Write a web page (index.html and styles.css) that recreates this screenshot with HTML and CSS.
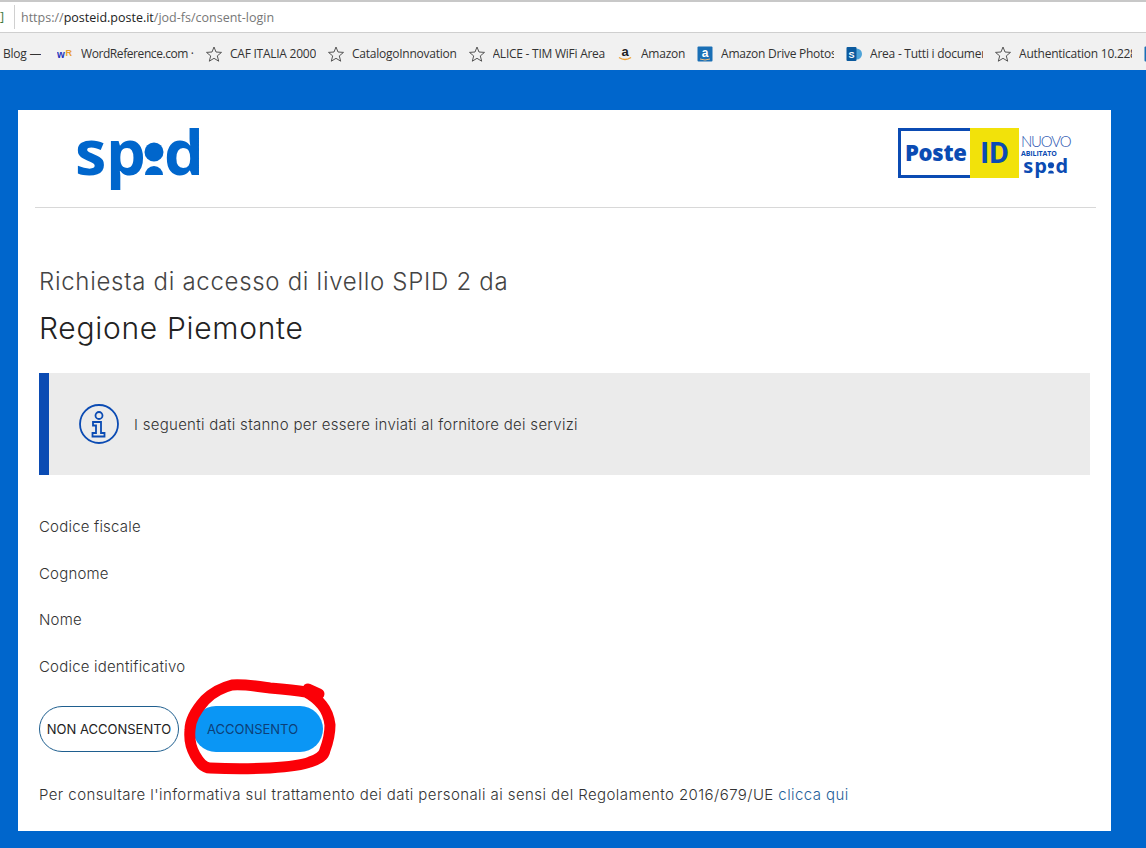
FILE: index.html
```html
<!DOCTYPE html>
<html lang="it">
<head>
<meta charset="utf-8">
<title>SPID consent</title>
<link rel="stylesheet" href="styles.css">
</head>
<body>
<header class="chrome">
  <div class="addressbar">
    <span class="secure">]</span>
    <span class="url"><span class="dim">https://</span>posteid.poste.it<span class="dim">/jod-fs/consent-login</span></span>
  </div>
  <nav class="bookmarks">
    <span class="bm bm-blog"><span class="bm-label">Blog —</span></span>
    <span class="bm"><svg class="ic" viewBox="0 0 16 16"><text x="0" y="12" class="wr-w">w</text><text x="8.500" y="10" class="wr-r">R</text></svg><span class="bm-label bm-tight">WordReference.com ·</span></span>
    <span class="bm"><svg class="ic" viewBox="0 0 16 16"><path class="star" d="M8 1l2 5 5.500 .4-4.200 3.500 1.400 5.300L8 12.300 3.300 15.200l1.400-5.300L.5 6.400 6 6z"/></svg><span class="bm-label">CAF ITALIA 2000</span></span>
    <span class="bm"><svg class="ic" viewBox="0 0 16 16"><path class="star" d="M8 1l2 5 5.500 .4-4.200 3.500 1.400 5.300L8 12.300 3.300 15.200l1.400-5.300L.5 6.400 6 6z"/></svg><span class="bm-label">CatalogoInnovation</span></span>
    <span class="bm"><svg class="ic" viewBox="0 0 16 16"><path class="star" d="M8 1l2 5 5.500 .4-4.200 3.500 1.400 5.300L8 12.300 3.300 15.200l1.400-5.300L.5 6.400 6 6z"/></svg><span class="bm-label">ALICE - TIM WiFi Area</span></span>
    <span class="bm"><svg class="ic" viewBox="0 0 16 16"><text x="8" y="10" class="az-a">a</text><path class="az-smile" d="M2 11.500q6 4 12 0"/></svg><span class="bm-label">Amazon</span></span>
    <span class="bm"><svg class="ic" viewBox="0 0 16 16"><rect class="az-box" x="0.500" y="0.500" width="15" height="15" rx="1"/><text x="8" y="11" class="az-b">a</text><path class="az-line" d="M3 13q5 2 10 0"/></svg><span class="bm-label">Amazon Drive Photos</span></span>
    <span class="bm"><svg class="ic" viewBox="0 0 16 16"><circle class="sp-c" cx="10.500" cy="8" r="5.500"/><rect class="sp-box" x="0.500" y="1" width="10" height="14" rx="1"/><text x="5.500" y="11.500" class="sp-s">S</text></svg><span class="bm-label">Area - Tutti i documenti</span></span>
    <span class="bm"><svg class="ic" viewBox="0 0 16 16"><path class="star" d="M8 1l2 5 5.500 .4-4.200 3.500 1.400 5.300L8 12.300 3.300 15.200l1.400-5.300L.5 6.400 6 6z"/></svg><span class="bm-label">Authentication 10.228.1</span></span>
    <span class="bm"><svg class="ic" viewBox="0 0 16 16"><rect class="az-box" x="0.500" y="0.500" width="15" height="15" rx="1"/></svg></span>
  </nav>
</header>

<main class="page">
  <section class="card">
    <div class="logos">
      <svg class="spid" viewBox="0 0 126 62" role="img" aria-label="spid">
        <text y="47" class="spid-t"><tspan x="0">s</tspan><tspan x="31">p</tspan></text>
        <circle class="spid-f" cx="79" cy="24" r="9.500"/>
        <path class="spid-f" d="M70 47a9 9 0 0 1 18 0z"/>
        <text x="89" y="47" class="spid-t">d</text>
      </svg>
      <div class="posteid">
        <div class="poste-box">Poste</div>
        <div class="id-box">ID</div>
        <div class="poste-side">
          <span class="nuovo">NUOVO</span>
          <span class="abil">ABILITATO</span>
          <svg class="spid-mini" viewBox="0 0 50 22" role="img" aria-label="spid">
            <text y="17" class="mini-t"><tspan x="0">s</tspan><tspan x="12">p</tspan></text>
            <circle class="mini-f" cx="30.500" cy="8" r="3.400"/>
            <path class="mini-f" d="M27.300 17a3.200 3.200 0 0 1 6.400 0z"/>
            <text x="35.500" y="17" class="mini-t">d</text>
          </svg>
        </div>
      </div>
    </div>

    <div class="content">
      <p class="lead">Richiesta di accesso di livello SPID 2 da</p>
      <h1 class="title">Regione Piemonte</h1>

      <div class="notice">
        <svg class="info" viewBox="0 0 40 40">
          <circle cx="20" cy="20" r="19"/>
          <circle cx="20" cy="11.500" r="3.500"/>
          <path d="M14 18h8v11h3.500v3.500h-12V29H17v-7.500h-3z"/>
        </svg>
        <span>I seguenti dati stanno per essere inviati al fornitore dei servizi</span>
      </div>

      <ul class="fields">
        <li>Codice fiscale</li>
        <li>Cognome</li>
        <li>Nome</li>
        <li>Codice identificativo</li>
      </ul>

      <div class="actions">
        <button class="btn btn-no">NON ACCONSENTO</button>
        <button class="btn btn-yes">ACCONSENTO</button>
      </div>

      <p class="privacy">Per consultare l'informativa sul trattamento dei dati personali ai sensi del Regolamento 2016/679/UE <a href="#">clicca qui</a></p>
    </div>
  </section>
</main>

<svg class="scribble" viewBox="0 0 160 105">
  <path d="M48 10C36 13 28 18 21 25 12 35 6 45 6 55c-1 10 1 18 5 25 4 7 8 13 15 13 20 1 40 1 60 0 15-1 30-2 40-6 9-3 14-6 15-12 3-8 5-17 5-25-1-8-3-14-8-20-4-5-10-10-16-13-12-2-24-3-36-4C72 11 60 9 48 10z"/>
  <path d="M124 14l11 5"/>
</svg>
</body>
</html>
```
FILE: styles.css
```css
* { box-sizing: border-box; }
html, body { margin: 0; padding: 0; }
body {
  width: 1146px;
  height: 848px;
  overflow: hidden;
  background: #0066cc;
  font-family: "Inter", "Lato", sans-serif;
  color: #333;
  position: relative;
}

/* Browser chrome */
.chrome {
  height: 70px;
  background: #f1f1f1;
  border-top: 2px solid #c8c8c8;
  font-family: "Open Sans", sans-serif;
}
.addressbar {
  height: 31px;
  background: #fff;
  border-bottom: 1px solid #cfcfcf;
  display: flex;
  align-items: center;
  font-size: 12.500px;
}
.secure { width: 15px; color: #3c7a3c; border-right: 1px solid #d0d0d0; height: 24px; line-height: 24px; }
.url { margin-left: 6px; color: #222; }
.dim { color: #777; }
.bookmarks {
  display: flex;
  align-items: center;
  gap: 12px;
  height: 37px;
  padding: 4px 0 0 3px;
  font-size: 12px;
  color: #333;
  white-space: nowrap;
  overflow: hidden;
}
.bm { display: flex; align-items: center; gap: 8px; flex: none; }
.bm-blog { width: 42px; }
.bm-label { max-width: 113px; overflow: hidden; letter-spacing: -0.25px; }
.bm-tight { width: 113px; letter-spacing: -0.42px; }
.ic { width: 16px; height: 16px; flex: none; display: block; }
.star { fill: none; stroke: #555; stroke-width: 1; }
.wr-w { font: bold 10px "Liberation Sans", sans-serif; fill: #2233bb; }
.wr-r { font: bold 9px "Liberation Sans", sans-serif; fill: #e8a030; }
.az-a { font: bold 13px "Liberation Sans", sans-serif; fill: #222; text-anchor: middle; }
.az-smile { fill: none; stroke: #f0a030; stroke-width: 1.500; }
.az-box { fill: #1a6fb5; }
.az-b { font: bold 12px "Liberation Sans", sans-serif; fill: #fff; text-anchor: middle; }
.az-line { fill: none; stroke: #f0c080; stroke-width: 1; }
.sp-c { fill: #4ea3d8; }
.sp-box { fill: #0b5a9e; }
.sp-s { font: bold 9px "Liberation Sans", sans-serif; fill: #fff; text-anchor: middle; }

/* Page */
.page { padding: 40px 35px 0 18px; }
.card {
  height: 721px;
  background: #fff;
  padding: 0 15px 0 17px;
}
.logos {
  height: 98px;
  border-bottom: 1px solid #d8d8d8;
  display: flex;
  justify-content: space-between;
  padding: 18px 26px 0 40px;
}
.spid { width: 126px; height: 62px; display: block; }
.spid-t { font: bold 63px "Open Sans", sans-serif; fill: #0066cc; }
.spid-f { fill: #0066cc; }

.posteid { display: flex; height: 50px; }
.poste-box {
  width: 72px;
  border: 3px solid #0b4bb3;
  border-right: 0;
  font: 800 22px/43px "Open Sans", sans-serif;
  letter-spacing: -0.3px;
  color: #0b4bb3;
  padding-left: 4px;
}
.id-box {
  width: 49px;
  background: #f2e20a;
  color: #0b4bb3;
  text-align: center;
  font: bold 30px/49px "Roboto", sans-serif;
}
.poste-side { width: 51px; padding-left: 2px; display: flex; flex-direction: column; color: #0b4bb3; }
.nuovo { font: 300 15px/15px "Lato", sans-serif; margin-top: 6px; letter-spacing: -1.2px; color: #2b55b0; }
.abil { font: bold 7px/9px "Open Sans", sans-serif; letter-spacing: -0.1px; }
.spid-mini { width: 50px; height: 22px; display: block; }
.mini-t { font: bold 22px "Open Sans", sans-serif; fill: #0b4bb3; }
.mini-f { fill: #0b4bb3; }

.content { padding: 0 6px 0 4px; }
.lead {
  margin: 58px 0 0;
  font-size: 24px;
  line-height: 32px;
  font-weight: 300;
  color: #444;
  letter-spacing: 0.7px;
}
.title {
  margin: 11px 0 0;
  font-size: 30px;
  line-height: 38px;
  font-weight: 300;
  color: #222;
  letter-spacing: 0.7px;
}
.notice {
  margin-top: 26px;
  height: 102px;
  background: #ebebeb;
  border-left: 10px solid #0b4bb3;
  display: flex;
  align-items: center;
  gap: 15px;
  padding-left: 30px;
  font-size: 15px;
  font-weight: 300;
  color: #333;
  letter-spacing: 0.28px;
}
.info { width: 40px; height: 40px; flex: none; }
.info circle, .info path { fill: none; stroke: #0b4bb3; stroke-width: 1.800; }

.fields {
  list-style: none;
  margin: 41px 0 0;
  padding: 0;
  font-size: 15px;
  font-weight: 300;
  line-height: 22px;
  color: #333;
  letter-spacing: 0.2px;
  display: flex;
  flex-direction: column;
  gap: 24.600px;
}
.actions { display: flex; gap: 14px; margin-top: 28px; }
.btn {
  height: 46px;
  border-radius: 23px;
  font-family: "Inter", sans-serif;
  font-weight: 400;
  font-size: 13px;
  padding: 0;
  color: #222;
}
.btn-no { width: 140px; background: #fff; border: 1px solid #1f5f8f; }
.btn-yes { width: 130px; background: #0a96f5; border: 0; color: #0d3f78; padding-right: 11px; }
.privacy {
  margin: 33px 0 0;
  font-size: 15px;
  font-weight: 300;
  line-height: 20px;
  color: #333;
  letter-spacing: 0.42px;
}
.privacy a { color: #1f5f99; text-decoration: none; }

/* Hand-drawn annotation on top of the screenshot */
.scribble {
  position: absolute;
  left: 184px;
  top: 675px;
  width: 160px;
  height: 105px;
  overflow: visible;
}
.scribble path { fill: none; stroke: #fb0007; stroke-width: 11; stroke-linecap: round; stroke-linejoin: round; }
```
